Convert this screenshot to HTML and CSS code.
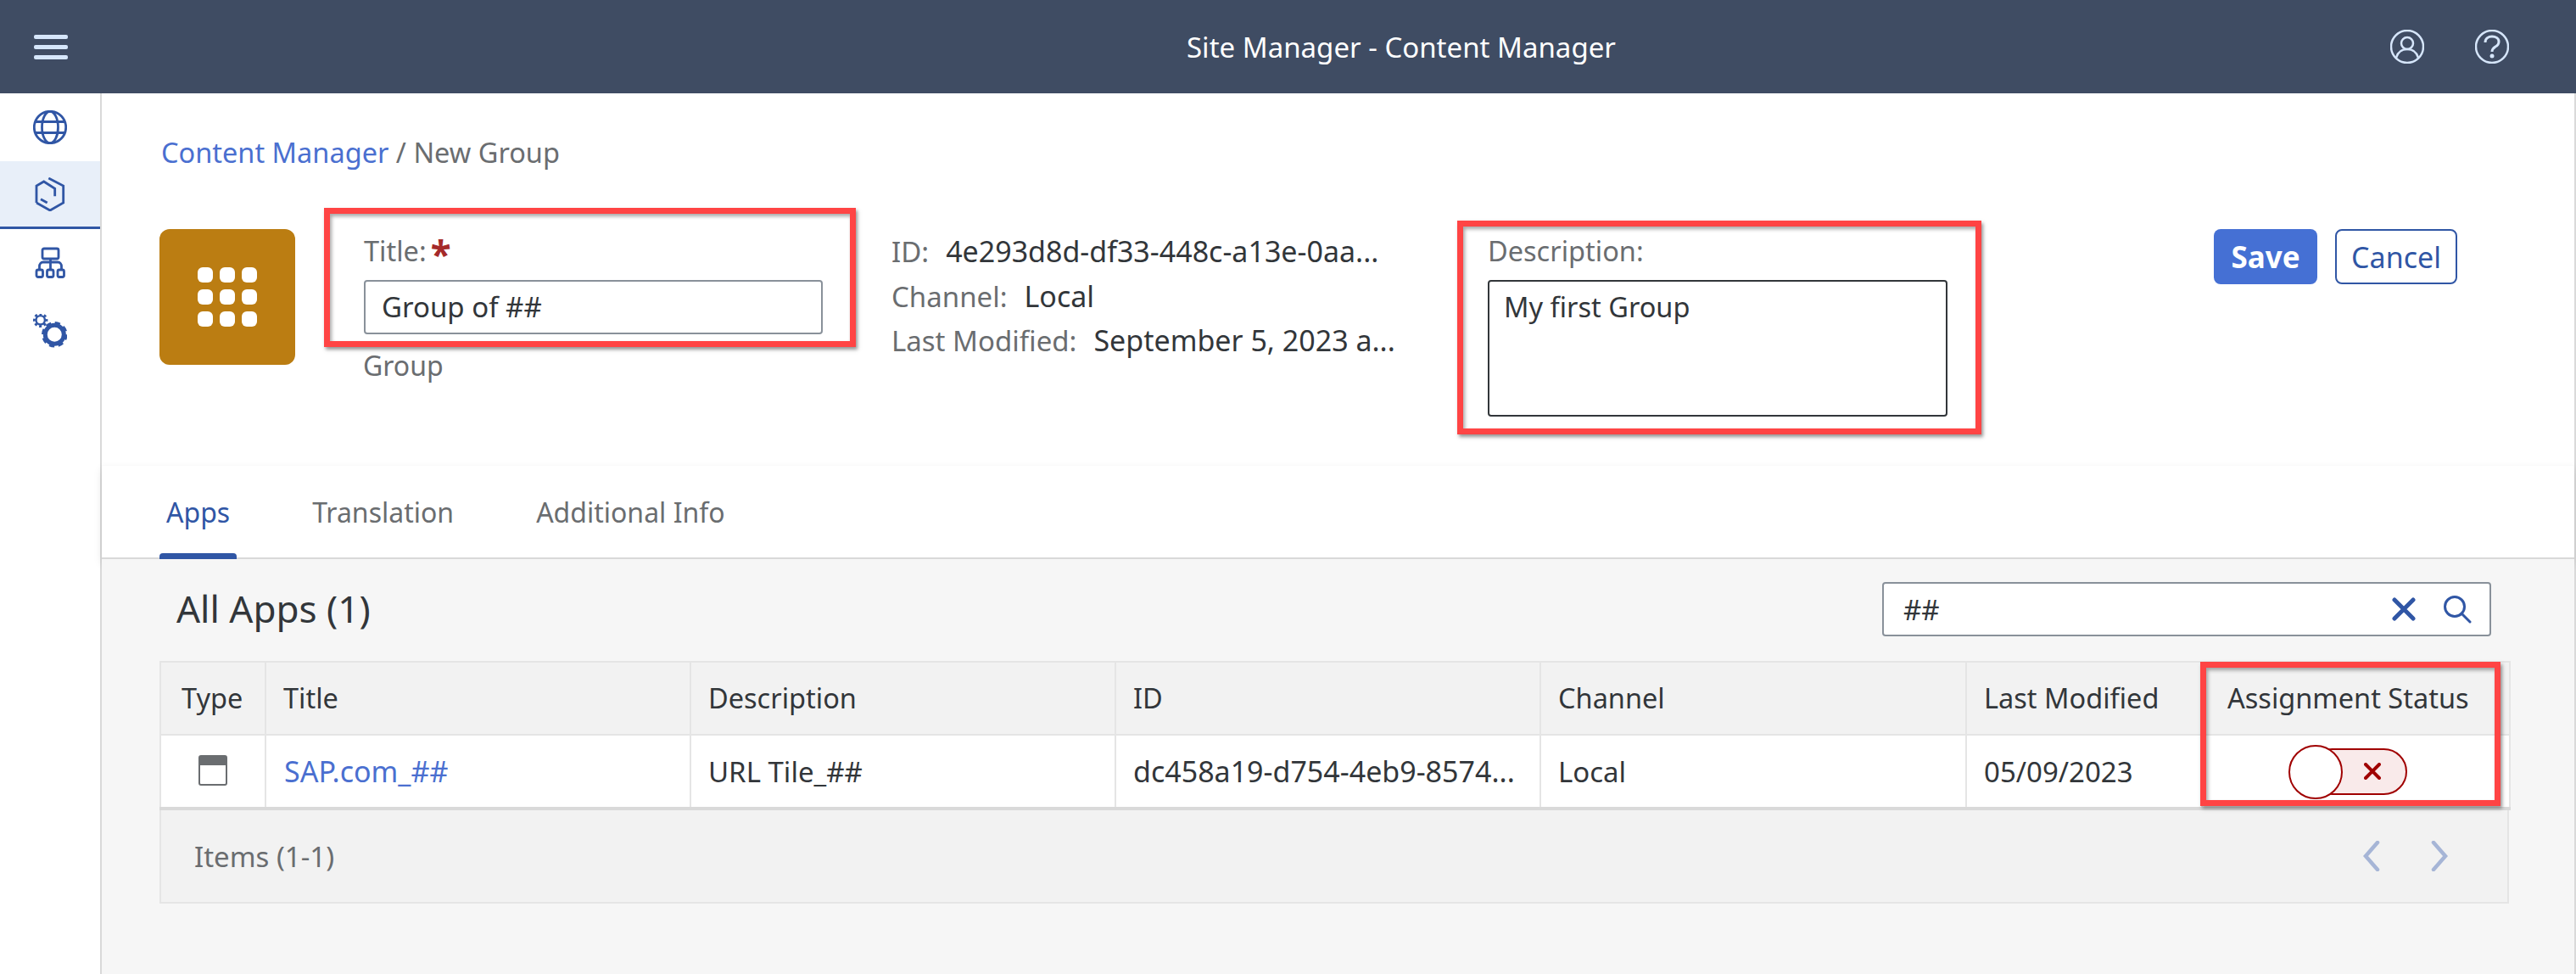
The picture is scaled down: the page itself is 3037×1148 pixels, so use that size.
FILE: index.html
```html
<!DOCTYPE html>
<html lang="en">
<head>
  <meta charset="UTF-8">
  <title>Site Manager - Content Manager</title>
  <link rel="stylesheet" href="styles.css">
</head>
<body>
  <header class="topbar">
    <svg class="icon-menu" viewBox="0 0 40 30" aria-hidden="true">
      <rect x="0" y="1" width="40" height="5" rx="2"/>
      <rect x="0" y="13" width="40" height="5" rx="2"/>
      <rect x="0" y="25" width="40" height="5" rx="2"/>
    </svg>
    <div class="topbar-title">Site Manager - Content Manager</div>
    <div class="topbar-actions">
      <svg viewBox="0 0 40 40" aria-hidden="true">
        <circle cx="20" cy="20" r="19"/>
        <circle cx="20" cy="16" r="7"/>
        <path d="M7 33c2-7 7-10 13-10s11 3 13 10"/>
      </svg>
      <svg viewBox="0 0 40 40" aria-hidden="true">
        <circle cx="20" cy="20" r="19"/>
        <path d="M12 15c0-5 4-7 8-7s8 2 8 6c0 3-2 5-4 6-3 2-4 3-4 6" stroke-width="3"/>
        <circle class="dot" cx="20" cy="31" r="2.5"/>
      </svg>
    </div>
  </header>

  <div class="layout">
    <nav class="sidenav">
      <div class="nav-item">
        <svg viewBox="0 0 40 40" aria-hidden="true">
          <circle cx="20" cy="20" r="18.7"/>
          <ellipse cx="20" cy="20" rx="9.5" ry="18.7"/>
          <path d="M3 13.500h34M3 26.500h34"/>
        </svg>
      </div>
      <div class="nav-item active">
        <svg viewBox="0 0 40 40" aria-hidden="true">
          <path d="M4 30V10l8.700-5 13 8.300v9"/>
          <path d="M18.300 1l17.400 9v20L20 39 4 30"/>
          <path d="M9 25.700l7.700 4.300"/>
        </svg>
      </div>
      <div class="nav-item">
        <svg viewBox="0 0 40 40" aria-hidden="true">
          <rect x="11" y="3" width="19" height="12" rx="2"/>
          <path d="M20.500 15v12M7.500 27v-3c0-3 2-5 4-5h18c2 0 4 2 4 5v3"/>
          <rect x="4" y="28" width="7.500" height="8.500" rx="2"/>
          <rect x="16.500" y="28" width="7.500" height="8.500" rx="2"/>
          <rect x="29" y="28" width="7.500" height="8.500" rx="2"/>
        </svg>
      </div>
      <div class="nav-item">
        <svg viewBox="0 0 40 40" aria-hidden="true">
          <circle class="gear-body-small" cx="8.700" cy="7.300" r="5.200"/>
          <circle class="gear-teeth-small" cx="8.700" cy="7.300" r="7.300"/>
          <circle class="gear-body" cx="25.300" cy="24.300" r="11"/>
          <circle class="gear-teeth" cx="25.300" cy="24.300" r="13.300"/>
        </svg>
      </div>
    </nav>

    <main class="main">
      <section class="object-page">
        <div class="breadcrumb"><a href="#">Content Manager</a> / New Group</div>

        <div class="object-row">
          <div class="tile">
            <div class="tile-grid">
              <span></span><span></span><span></span>
              <span></span><span></span><span></span>
              <span></span><span></span><span></span>
            </div>
          </div>

          <div class="title-col">
            <div class="callout title-field">
              <div class="field-label">Title:<span class="required">*</span></div>
              <div class="text-input">Group of ##</div>
            </div>
            <div class="object-type">Group</div>
          </div>

          <div class="meta">
            <div class="meta-row"><span class="meta-label">ID:</span><span class="meta-value">4e293d8d-df33-448c-a13e-0aa...</span></div>
            <div class="meta-row"><span class="meta-label">Channel:</span><span class="meta-value">Local</span></div>
            <div class="meta-row"><span class="meta-label">Last Modified:</span><span class="meta-value">September 5, 2023 a...</span></div>
          </div>

          <div class="callout desc-field">
            <div class="field-label">Description:</div>
            <div class="text-area">My first Group</div>
          </div>

          <div class="actions">
            <button class="btn btn-primary">Save</button>
            <button class="btn btn-outline">Cancel</button>
          </div>
        </div>
      </section>

      <div class="tabs">
        <div class="tab active">Apps</div>
        <div class="tab">Translation</div>
        <div class="tab">Additional Info</div>
      </div>

      <section class="content">
        <div class="toolbar">
          <h2>All Apps (1)</h2>
          <div class="search">
            <span class="search-text">##</span>
            <svg class="icon-clear" viewBox="0 0 28 28" aria-hidden="true"><path d="M3 3l22 22M25 3 3 25"/></svg>
            <svg class="icon-search" viewBox="0 0 34 34" aria-hidden="true"><circle cx="14" cy="14" r="11.500"/><path d="M22 22l10 10"/></svg>
          </div>
        </div>

        <div class="table-wrap">
          <table>
            <colgroup>
              <col class="col-type"><col class="col-title"><col class="col-desc"><col class="col-id">
              <col class="col-channel"><col class="col-modified"><col class="col-status">
            </colgroup>
            <thead>
              <tr>
                <th class="type-head">Type</th>
                <th>Title</th>
                <th>Description</th>
                <th>ID</th>
                <th>Channel</th>
                <th>Last Modified</th>
                <th class="status-head">Assignment Status</th>
              </tr>
            </thead>
            <tbody>
              <tr>
                <td class="type-cell">
                  <svg class="icon-window" viewBox="0 0 34 36" aria-hidden="true">
                    <rect x="1" y="1" width="32" height="34" rx="2"/>
                    <path d="M1 3a2 2 0 0 1 2-2h28a2 2 0 0 1 2 2v9H1z"/>
                  </svg>
                </td>
                <td class="cell-wide"><a href="#">SAP.com_##</a></td>
                <td>URL Tile_##</td>
                <td class="cell-wide">dc458a19-d754-4eb9-8574...</td>
                <td>Local</td>
                <td>05/09/2023</td>
                <td class="status-cell">
                  <div class="toggle">
                    <span class="knob"></span>
                    <svg viewBox="0 0 20 20" aria-hidden="true"><path d="M2 2l16 16M18 2 2 18"/></svg>
                  </div>
                </td>
              </tr>
            </tbody>
          </table>
          <div class="table-footer">
            <span>Items (1-1)</span>
            <div class="pager">
              <svg viewBox="0 0 20 36" aria-hidden="true"><path d="M17 2 3 18l14 16"/></svg>
              <svg viewBox="0 0 20 36" aria-hidden="true"><path d="M3 2l14 16L3 34"/></svg>
            </div>
          </div>
          <!-- red annotation box over the last column -->
          <div class="callout status-callout"></div>
        </div>
      </section>
    </main>
  </div>
</body>
</html>
```

FILE: styles.css
```css
* {
  box-sizing: border-box;
}

body {
  margin: 0;
  height: 100vh;
  display: flex;
  flex-direction: column;
  overflow: hidden;
  font-family: "Noto Sans", Arial, sans-serif;
  font-size: 33px;
  color: #32363a;
  background-color: #fff;
}

a {
  color: #4a6fd0;
  text-decoration: none;
}

/* top bar */
.topbar {
  height: 110px;
  flex: none;
  display: flex;
  align-items: center;
  padding-left: 40px;
  background-color: #3f4c63;
}

.icon-menu {
  width: 40px;
  height: 30px;
  fill: #d6e6fb;
}

.topbar-title {
  margin-left: 1319px;
  color: #fff;
  white-space: nowrap;
}

.topbar-actions {
  margin-left: auto;
  margin-right: 79px;
  display: flex;
  gap: 60px;
}

.topbar-actions svg {
  width: 40px;
  height: 40px;
  fill: none;
  stroke: #d6e6fb;
  stroke-width: 2.500;
}

.topbar-actions .dot {
  fill: #d6e6fb;
  stroke: none;
}

/* side navigation */
.layout {
  flex: 1;
  display: flex;
  min-height: 0;
}

.sidenav {
  width: 120px;
  flex: none;
  border-right: 2px solid #d9d9d9;
}

.nav-item {
  height: 80px;
  display: flex;
  align-items: center;
  justify-content: center;
}

.nav-item svg {
  width: 40px;
  height: 40px;
  fill: none;
  stroke: #3056a5;
  stroke-width: 2.800;
}

.nav-item.active {
  background-color: #e8eff9;
  border-bottom: 3px solid #3056a5;
}

.nav-item .gear-body {
  stroke-width: 5;
}

.nav-item .gear-teeth {
  stroke-width: 4;
  stroke-dasharray: 6 4.450;
}

.nav-item .gear-body-small {
  stroke-width: 2.400;
}

.nav-item .gear-teeth-small {
  stroke-width: 2.800;
  stroke-dasharray: 3 2.730;
  stroke-dashoffset: 1.500;
}

/* object header */
.main {
  flex: 1;
  display: flex;
  flex-direction: column;
  min-width: 0;
  border-right: 2px solid #d9d9d9;
}

.object-page {
  height: 438px;
  flex: none;
  padding-left: 68px;
}

.breadcrumb {
  height: 135px;
  padding: 50px 0 0 2px;
  font-size: 32.500px;
  line-height: 40px;
  color: #6a6d70;
}

.object-row {
  display: flex;
  align-items: flex-start;
}

.tile {
  width: 160px;
  height: 160px;
  flex: none;
  margin-top: 25px;
  display: flex;
  align-items: center;
  justify-content: center;
  border-radius: 12px;
  background-color: #bb7d12;
}

.tile-grid {
  display: grid;
  grid-template-columns: repeat(3, 18px);
  grid-auto-rows: 18px;
  gap: 8px;
}

.tile-grid span {
  border-radius: 6px;
  background-color: #fff;
}

.callout {
  border: 7px solid #ff4444;
  box-shadow: 2px 3px 4px rgba(60, 60, 60, 0.55), inset 2px 3px 4px rgba(60, 60, 60, 0.45);
}

.title-col {
  width: 627px;
  flex: none;
  margin-left: 34px;
}

.title-field {
  height: 164px;
  padding: 26px 32px 0 40px;
}

.field-label {
  height: 36px;
  font-size: 32.500px;
  line-height: 36px;
  color: #6a6d70;
  margin-bottom: 16px;
  white-space: nowrap;
}

.required {
  margin-left: 5px;
  color: #a52a2a;
  font-size: 44px;
  font-weight: bold;
  line-height: 0;
  vertical-align: -8px;
}

.text-input {
  height: 64px;
  line-height: 60px;
  padding-left: 19px;
  border: 2px solid #89919a;
  border-radius: 4px;
  background-color: #fff;
}

.object-type {
  margin-top: 4px;
  padding-left: 46px;
  font-size: 32px;
  line-height: 36px;
  color: #6a6d70;
}

.meta {
  width: 667px;
  flex: none;
  margin-top: 33px;
  margin-left: 42px;
}

.meta-row {
  height: 52.500px;
  line-height: 36px;
  white-space: nowrap;
}

.meta-label {
  margin-right: 20px;
  color: #6a6d70;
}

.meta-value {
  font-size: 34px;
}

.desc-field {
  width: 618px;
  height: 252px;
  flex: none;
  margin-top: 15px;
  padding: 11px 33px 0 29px;
}

.text-area {
  height: 161px;
  padding: 12px 17px;
  font-size: 32.500px;
  line-height: 36px;
  border: 2px solid #32363a;
  border-radius: 4px;
}

.actions {
  flex: none;
  display: flex;
  gap: 21px;
  margin-top: 25px;
  margin-left: 274px;
}

.btn {
  height: 65px;
  padding: 0;
  border-radius: 8px;
  font-family: inherit;
}

.btn-primary {
  width: 122px;
  border: 0;
  color: #fff;
  font-size: 35px;
  font-weight: bold;
  background-color: #4570d4;
}

.btn-outline {
  width: 144px;
  border: 2px solid #3056a5;
  color: #3056a5;
  font-size: 34px;
  background-color: #fff;
}

/* tabs */
.tabs {
  height: 111px;
  flex: none;
  display: flex;
  padding-left: 68px;
  border-top: 1px solid #fafafa;
  border-bottom: 2px solid #d9d9d9;
  box-shadow: 0 5px 10px rgba(0, 0, 0, 0.1);
  background-color: #fff;
}

.tab {
  position: relative;
  padding: 35px 8px 0;
  margin-right: 81px;
  font-size: 32px;
  color: #6a6d70;
  line-height: 40px;
}

.tab.active {
  color: #3056a5;
}

.tab.active::after {
  content: "";
  position: absolute;
  left: 0;
  right: 0;
  bottom: -2px;
  height: 7px;
  border-radius: 4px 4px 0 0;
  background-color: #3056a5;
}

/* table area */
.content {
  flex: 1;
  padding: 0 77px 0 68px;
  background-color: #f6f6f6;
}

.toolbar {
  height: 120px;
  display: flex;
  align-items: center;
  justify-content: space-between;
  padding: 0 21px 2px 20px;
}

.toolbar h2 {
  margin: 0 0 3px;
  font-size: 44px;
  font-weight: normal;
}

.search {
  width: 718px;
  height: 64px;
  display: flex;
  align-items: center;
  padding: 0 21px 0 23px;
  border: 2px solid #89919a;
  border-radius: 4px;
  background-color: #fff;
}

.search-text {
  flex: 1;
}

.icon-clear {
  width: 28px;
  height: 28px;
  fill: none;
  stroke: #3056a5;
  stroke-width: 5;
  stroke-linecap: round;
  margin-right: 32px;
}

.icon-search {
  width: 34px;
  height: 34px;
  fill: none;
  stroke: #3056a5;
  stroke-width: 3;
  stroke-linecap: round;
}

.table-wrap {
  position: relative;
  width: 2770px;
}

table {
  width: 100%;
  table-layout: fixed;
  border-collapse: collapse;
  background-color: #fff;
}

.col-type { width: 124px; }
.col-title { width: 501px; }
.col-desc { width: 501px; }
.col-id { width: 501px; }
.col-channel { width: 502px; }
.col-modified { width: 278px; }
.col-status { width: 363px; }

th, td {
  border: 2px solid #e5e5e5;
  padding: 0 20px;
  font-weight: normal;
  text-align: left;
  white-space: nowrap;
  overflow: hidden;
}

th {
  height: 86px;
  padding-bottom: 2px;
  font-size: 32.500px;
  background-color: #f2f2f2;
}

td {
  height: 87px;
  border-bottom-width: 4px;
  border-bottom-color: #d9d9d9;
}

.cell-wide {
  font-size: 34px;
}

td a {
  margin-left: 1px;
}

.type-head {
  padding-left: 24px;
}

.type-cell {
  padding: 8px 0 0;
  text-align: center;
}

.icon-window {
  width: 34px;
  height: 36px;
}

.icon-window rect {
  fill: #fff;
  stroke: #6a6d70;
  stroke-width: 2;
}

.icon-window path {
  fill: #6a6d70;
}

.status-head {
  padding-left: 29px;
}

.status-cell {
  padding: 0;
  overflow: visible;
}

.toggle {
  position: relative;
  width: 116px;
  height: 55px;
  margin-left: 125px;
  display: flex;
  align-items: center;
  justify-content: flex-end;
  padding-right: 29px;
  border: 2px solid #a00000;
  border-radius: 28px;
  background-color: #f9eaea;
}

.toggle svg {
  width: 20px;
  height: 20px;
  fill: none;
  stroke: #a00000;
  stroke-width: 4;
  stroke-linecap: round;
}

.knob {
  position: absolute;
  left: -26px;
  top: -6px;
  width: 64px;
  height: 64px;
  border: 2px solid #a00000;
  border-radius: 50%;
  background-color: #fff;
}

.table-footer {
  height: 110px;
  display: flex;
  align-items: center;
  justify-content: space-between;
  padding: 0 70px 0 39px;
  border: 2px solid #e5e5e5;
  border-top: 0;
  color: #6a6d70;
  background-color: #f2f2f2;
}

.pager {
  display: flex;
  gap: 60px;
}

.pager svg {
  width: 20px;
  height: 36px;
  fill: none;
  stroke: #a6b5d6;
  stroke-width: 4.500;
  stroke-linecap: round;
}

.status-callout {
  position: absolute;
  left: 2406px;
  top: 1px;
  width: 354px;
  height: 170px;
}
```
